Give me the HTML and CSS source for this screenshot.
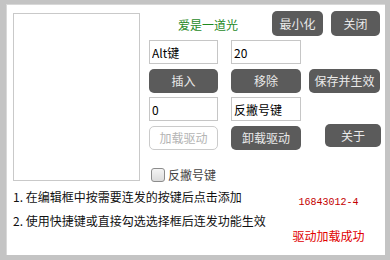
FILE: index.html
```html
<!DOCTYPE html>
<html lang="zh-CN">
<head>
    <meta charset="UTF-8">
    <title>按键连发</title>
    <link rel="stylesheet" href="styles.css">
</head>
<body>
    <div class="window">
        <div class="main">
            <!-- 按键列表 -->
            <div class="keylist"></div>

            <!-- 右侧操作区 -->
            <div class="panel">
                <div class="titlebar">
                    <span class="title">爱是一道光</span>
                    <div class="sysbtns">
                        <button class="btn btn-min">最小化</button>
                        <button class="btn btn-close">关闭</button>
                    </div>
                </div>

                <input class="field col-a" type="text" value="Alt键">
                <input class="field col-b" type="text" value="20">

                <button class="btn col-a">插入</button>
                <button class="btn col-b">移除</button>
                <button class="btn col-c">保存并生效</button>

                <input class="field col-a" type="text" value="0">
                <input class="field col-b" type="text" value="反撇号键">

                <button class="btn col-a" disabled>加载驱动</button>
                <button class="btn col-b">卸载驱动</button>
                <button class="btn col-c btn-about">关于</button>

                <label class="check col-a">
                    <span class="box"></span>反撇号键
                </label>
            </div>
        </div>

        <!-- 说明与状态 -->
        <div class="notes">
            <div class="tips">
                <p>1. 在编辑框中按需要连发的按键后点击添加</p>
                <p>2. 使用快捷键或直接勾选选择框后连发功能生效</p>
            </div>
            <div class="status">
                <p class="code">16843012-4</p>
                <p class="state">驱动加载成功</p>
            </div>
        </div>
    </div>
</body>
</html>
```

FILE: styles.css
```css
/* 基本页面 */
body {
    margin: 0;
    padding: 0;
    background-color: #ffffff;
    font-family: "Noto Sans CJK SC", sans-serif;
    font-size: 12px;
}

p {
    margin: 0;
}

/* 窗口外框 */
.window {
    width: 390px;
    height: 260px;
    box-sizing: border-box;
    border-style: solid;
    border-color: #c4c4c4;
    border-width: 4px 5px 5px 6px;
    box-shadow: inset 1px 1px 0 #d8d8d8;
    background-color: #ffffff;
}

.main {
    display: flex;
    padding: 7px 0 0 7px;
}

/* 按键列表框 */
.keylist {
    width: 127px;
    height: 168px;
    margin-top: 2px;
    box-sizing: border-box;
    border: 1px solid #c9c9c9;
    background-color: #ffffff;
}

/* 右侧网格 */
.panel {
    margin-left: 9px;
    display: grid;
    grid-template-columns: 69px 13px 70px 8px 71px;
    grid-template-rows: 29px 29px 28px 29px 41px 16px;
}

.col-a { grid-column: 1; }
.col-b { grid-column: 3; }
.col-c { grid-column: 5; }

.titlebar {
    grid-column: 1 / -1;
    display: flex;
    justify-content: space-between;
    align-items: flex-start;
}

.title {
    margin-left: 29px;
    margin-top: 6px;
    line-height: 16px;
    color: #1f8a1f;
}

.sysbtns {
    display: flex;
    gap: 8px;
}

.btn {
    height: 24px;
    padding: 0;
    border: none;
    border-radius: 5px;
    background-color: #5b5b5b;
    color: #eaeaea;
    font-family: "Noto Sans CJK SC", sans-serif;
    font-size: 12px;
    line-height: 24px;
    align-self: start;
}

.btn-min {
    width: 51px;
    height: 25px;
}

.btn-close {
    width: 49px;
    height: 25px;
}

.btn[disabled] {
    background-color: #ffffff;
    border: 1px solid #cbcbcb;
    color: #b4b4b4;
    line-height: 22px;
}

.btn-about {
    width: 56px;
    height: 23px;
    line-height: 23px;
    justify-self: end;
    margin-top: -2px;
    margin-right: -1px;
}

/* 输入框 */
.field {
    height: 24px;
    box-sizing: border-box;
    width: 100%;
    border: 1px solid #c6c6c6;
    padding: 0 2px;
    font-family: "Noto Sans CJK SC", sans-serif;
    font-size: 12px;
    color: #000000;
    align-self: start;
}

/* 复选框 */
.check {
    grid-column: 1 / 4;
    display: flex;
    align-items: center;
    gap: 3px;
    padding-left: 2px;
    line-height: 16px;
    color: #444444;
}

.box {
    width: 14px;
    height: 14px;
    box-sizing: border-box;
    border: 1px solid #8c8c8c;
    border-radius: 3px;
    background: linear-gradient(#f4f4f4, #dcdcdc);
}

/* 底部说明 */
.notes {
    display: flex;
    padding-left: 7px;
    margin-top: 2px;
}

.tips {
    width: 267px;
}

.tips p {
    line-height: 24px;
    color: #111111;
}

.status {
    width: 97px;
    text-align: center;
}

.code {
    margin-top: 10px;
    line-height: 16px;
    font-family: "Liberation Mono", monospace;
    font-size: 10px;
    color: #c40000;
}

.state {
    margin-top: 17px;
    line-height: 16px;
    color: #e00000;
}
```
